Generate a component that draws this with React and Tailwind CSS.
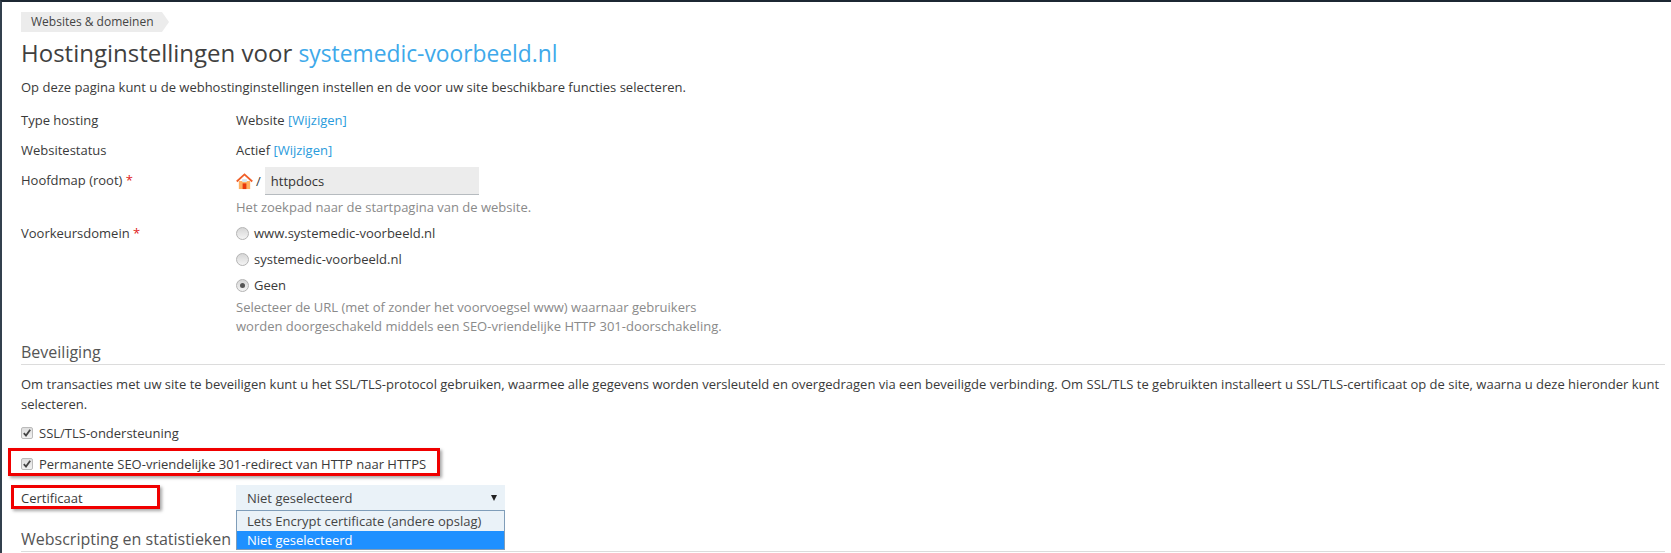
import React from "react";

const Star = () => <span className="text-[#e02020]"> *</span>;
const Link = ({ children }) => <span className="text-[#2a9bdc]">{children}</span>;

function Radio({ checked }) {
  return (
    <span className="flex items-center justify-center w-[13px] h-[13px] rounded-full border border-[#b4b4b4] bg-gradient-to-b from-[#d6d6d6] to-[#f4f4f4] mr-[5px] shrink-0">
      {checked && <span className="w-[5px] h-[5px] rounded-full bg-[#555]" />}
    </span>
  );
}

function Check() {
  return (
    <span className="flex items-center justify-center w-[12px] h-[12px] rounded-[2px] border border-[#bbb] bg-gradient-to-b from-[#dedede] to-[#f2f2f2] mr-[6px] shrink-0">
      <svg width="10" height="10" viewBox="0 0 10 10">
        <path d="M1.8 5.2 L4 7.6 L8.2 1.8" fill="none" stroke="#444" strokeWidth="1.8" />
      </svg>
    </span>
  );
}

function House() {
  return (
    <svg width="17" height="17" viewBox="0 0 18 18" className="shrink-0">
      <path d="M3 8.5 H15 V17 H3 Z" fill="#ffb060" />
      <path d="M0.8 9 L9 1.5 L17.2 9" fill="none" stroke="#f0602a" strokeWidth="2" />
      <rect x="7" y="11" width="4" height="6" fill="#e8380c" />
      <rect x="6.5" y="6.5" width="5" height="3" fill="#d8e8f0" />
    </svg>
  );
}

function Row({ label, children, className }) {
  return (
    <div className={`flex ${className}`}>
      <div className="w-[215px] shrink-0">{label}</div>
      <div>{children}</div>
    </div>
  );
}

export default function App() {
  return (
    <div
      className="relative w-[1671px] h-[553px] overflow-hidden bg-white text-[13px] leading-[18px] text-[#3a3a3a] border-t-2 border-l-2 border-t-[#1c2733] border-l-[#33404d]"
      style={{ fontFamily: '"Open Sans", "Noto Sans", sans-serif' }}
    >
      <div className="absolute left-[-2px] top-[44px] w-[2px] h-[40px] bg-[#d02020]" />
      <div className="pl-[19px] pr-[6px] pt-[10px]">
        <div
          className="flex items-center h-[20px] w-[148px] pl-[10px] bg-[#ececec] text-[12px] whitespace-nowrap text-[#444]"
          style={{ clipPath: "polygon(0 0, 141px 0, 148px 10px, 141px 20px, 0 20px)" }}
        >
          Websites &amp; domeinen
        </div>
        <h1 className="mt-[3px] h-[36px] text-[24px] leading-[36px] font-normal text-[#3f3f3f]">
          Hostinginstellingen voor <span className="text-[#3ea9ea] text-[22.8px]">systemedic-voorbeeld.nl</span>
        </h1>
        <p className="mt-[7px] h-[18px]">
          Op deze pagina kunt u de webhostinginstellingen instellen en de voor uw site beschikbare functies selecteren.
        </p>

        <Row label="Type hosting" className="mt-[15px] h-[18px]">
          Website <Link>[Wijzigen]</Link>
        </Row>
        <Row label="Websitestatus" className="mt-[12px] h-[18px]">
          Actief <Link>[Wijzigen]</Link>
        </Row>
        <Row label={<span className="block pt-[6px]">Hoofdmap (root)<Star /></span>} className="mt-[6px] h-[28px]">
          <div className="flex items-center h-[28px] mt-[2px]">
            <House />
            <span className="ml-[3px] mr-[4px]">/</span>
            <div className="flex items-center w-[214px] h-[28px] px-[6px] bg-[#ececec] border-b border-[#b6bbbf] text-[#333]">
              httpdocs
            </div>
          </div>
        </Row>
        <Row label="" className="mt-[5px] h-[18px]">
          <span className="text-[#8a8a8a]">Het zoekpad naar de startpagina van de website.</span>
        </Row>
        <Row label={<span>Voorkeursdomein<Star /></span>} className="mt-[8px] h-[18px]">
          <div className="flex items-center"><Radio />www.systemedic-voorbeeld.nl</div>
        </Row>
        <Row label="" className="mt-[8px] h-[18px]">
          <div className="flex items-center"><Radio />systemedic-voorbeeld.nl</div>
        </Row>
        <Row label="" className="mt-[8px] h-[18px]">
          <div className="flex items-center"><Radio checked />Geen</div>
        </Row>
        <Row label="" className="mt-[4px]">
          <p className="text-[#8a8a8a] leading-[18.5px]">
            Selecteer de URL (met of zonder het voorvoegsel www) waarnaar gebruikers
            <br />
            worden doorgeschakeld middels een SEO-vriendelijke HTTP 301-doorschakeling.
          </p>
        </Row>

        <h2 className="mt-[5px] h-[25px] text-[16px] leading-[24px] font-normal text-[#555] border-b border-[#dcdcdc]">
          Beveiliging
        </h2>
        <p className="mt-[9px] leading-[20px]">
          Om transacties met uw site te beveiligen kunt u het SSL/TLS-protocol gebruiken, waarmee alle gegevens worden versleuteld en overgedragen via een beveiligde verbinding. Om SSL/TLS te gebruikten installeert u SSL/TLS-certificaat op de site, waarna u deze hieronder kunt selecteren.
        </p>
        <div className="flex items-center mt-[10px] h-[18px]"><Check />SSL/TLS-ondersteuning</div>
        <div className="flex items-center mt-[13px] h-[18px]"><Check />Permanente SEO-vriendelijke 301-redirect van HTTP naar HTTPS</div>
        <Row label={<span className="block pt-[4px]">Certificaat</span>} className="mt-[12px] h-[26px]">
          <div className="flex items-center justify-between w-[269px] h-[26px] pl-[11px] pr-[8px] bg-[#eaf2f8] text-[#444]">
            Niet geselecteerd
            <span className="w-0 h-0 border-x-[3.5px] border-x-transparent border-t-[6px] border-t-[#222]" />
          </div>
        </Row>
        <h2 className="mt-[16px] h-[25px] text-[16px] leading-[24px] font-normal text-[#555] border-b border-[#dcdcdc]">
          Webscripting en statistieken
        </h2>
      </div>

      {/* annotations and open list */}
      <div className="absolute left-[6px] top-[446px] w-[432px] h-[28px] border-[3px] border-[#f00000] shadow-[2px_2px_3px_rgba(0,0,0,0.35)]" />
      <div className="absolute left-[9px] top-[483px] w-[149px] h-[24px] border-[3px] border-[#f00000] shadow-[2px_2px_3px_rgba(0,0,0,0.35)]" />
      <div className="absolute left-[234px] top-[508px] w-[269px] h-[40px] border border-[#7f9db9] bg-white text-[13px]">
        <div className="flex items-center h-[20px] pl-[10px] bg-[#eaf2f8] text-[#444]">Lets Encrypt certificate (andere opslag)</div>
        <div className="flex items-center h-[18px] pl-[10px] bg-[#1e90ff] text-white">Niet geselecteerd</div>
      </div>
    </div>
  );
}
